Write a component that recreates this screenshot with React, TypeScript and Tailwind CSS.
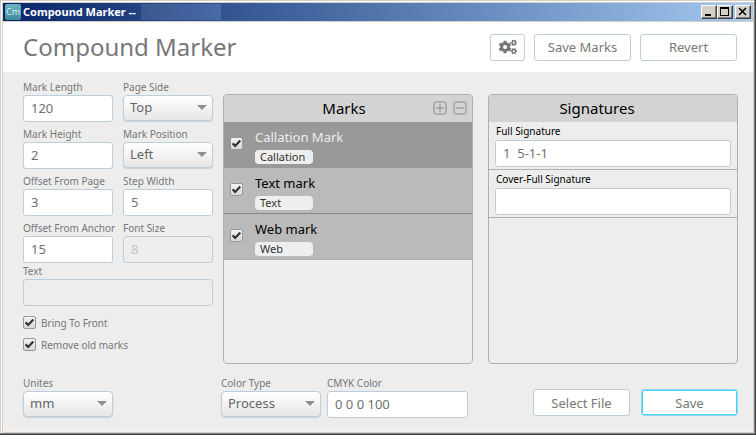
import { useState } from 'react'
import type { ReactNode } from 'react'
import { FaCogs } from 'react-icons/fa'

interface FieldProps {
  id: string
  label: string
  className?: string
  children: ReactNode
}

function Field({ id, label, className = '', children }: FieldProps) {
  return (
    <div className={`flex min-w-0 flex-col ${className}`}>
      <label htmlFor={id} className="h-[14px] text-[10px] leading-[13px] whitespace-nowrap text-[#777]">
        {label}
      </label>
      {children}
    </div>
  )
}

interface TextInputProps {
  id: string
  value?: string
  disabled?: boolean
}

function TextInput({ id, value = '', disabled = false }: TextInputProps) {
  return (
    <input
      id={id}
      type="text"
      defaultValue={value}
      disabled={disabled}
      className="h-[27px] w-full rounded-[3px] border border-[#bccddb] bg-white px-[7px] pb-[2px] text-[13px] whitespace-pre text-[#707070] outline-none disabled:bg-[#ededed] disabled:text-[#c4c4c4]"
    />
  )
}

function Select({ id, options }: { id: string; options: string[] }) {
  return (
    <div className="relative h-[27px]">
      <select
        id={id}
        className="block h-[26px] w-full appearance-none rounded-[4px] border border-[#bccddb] bg-linear-to-b from-white to-[#e6e6e6] px-[6px] text-[13px] text-[#666] shadow-[0_1px_1px_#c8cdd1] outline-none"
      >
        {options.map((o) => (
          <option key={o}>{o}</option>
        ))}
      </select>
      <svg viewBox="0 0 10 5" className="pointer-events-none absolute top-[10px] right-[6px] h-[5px] w-[10px] fill-[#8f8f8f]">
        <path d="M0 0h10L5 5z" />
      </svg>
    </div>
  )
}

function CheckBox({ id, label }: { id: string; label?: string }) {
  const [checked, setChecked] = useState(true)
  return (
    <span className="relative block size-[13px] shrink-0">
      <input
        id={id}
        type="checkbox"
        aria-label={label}
        checked={checked}
        onChange={(e) => setChecked(e.target.checked)}
        className="block size-[13px] appearance-none rounded-[2px] border border-[#989898] bg-linear-to-b from-[#f4f4f4] to-[#d8d8d8]"
      />
      {checked && (
        <svg viewBox="0 0 13 13" className="pointer-events-none absolute inset-0 size-[13px] fill-none stroke-[#353535]">
          <path d="M2.6 6.4 5.2 9 10.3 3.5" strokeWidth="2.2" />
        </svg>
      )}
    </span>
  )
}

function Button({ className = '', children }: { className?: string; children: ReactNode }) {
  return (
    <button
      type="button"
      className={`flex h-[27px] items-center justify-center rounded-[3px] border bg-white text-[13px] text-[#777] ${className}`}
    >
      {children}
    </button>
  )
}

function WindowButton({ label, children }: { label: string; children: ReactNode }) {
  return (
    <button
      type="button"
      aria-label={label}
      className="flex h-[14px] w-[16px] items-center justify-center border border-t-white border-r-[#404040] border-b-[#404040] border-l-white bg-[#d4d0c8] shadow-[inset_-1px_-1px_0_#808080]"
    >
      <svg viewBox="0 0 14 12" className="h-[12px] w-[14px] fill-none stroke-black" shapeRendering="crispEdges">
        {children}
      </svg>
    </button>
  )
}

const marks = [
  { name: 'Callation Mark', type: 'Callation' },
  { name: 'Text mark', type: 'Text' },
  { name: 'Web mark', type: 'Web' },
]

function MarksPanel() {
  const [selected, setSelected] = useState(0)
  return (
    <section className="flex flex-1 flex-col overflow-hidden rounded-[4px] border border-[#aeb0b0]">
      <header className="grid h-[27px] grid-cols-[1fr_auto_1fr] items-center bg-[#d3d3d3] px-[5px]">
        <h2 className="col-start-2 pr-2 text-[15px] text-black">Marks</h2>
        <div className="flex justify-end gap-[6px] pb-[2px]">
          <button type="button" aria-label="Add mark">
            <svg viewBox="0 0 14 14" className="block size-[14px] fill-none stroke-[#8c8c8c]">
              <rect x="1" y="1" width="12" height="12" rx="2" />
              <path d="M7 3v8M3 7h8" />
            </svg>
          </button>
          <button type="button" aria-label="Remove mark">
            <svg viewBox="0 0 14 14" className="block size-[14px] fill-none stroke-[#8c8c8c]">
              <rect x="1" y="1" width="12" height="12" rx="2" />
              <path d="M3 7h8" />
            </svg>
          </button>
        </div>
      </header>
      <ul>
        {marks.map((mark, i) => (
          <li
            key={mark.name}
            onClick={() => setSelected(i)}
            className={`flex h-[46px] items-center gap-[12px] border-b pb-[2px] pl-[6px] ${
              i === selected
                ? 'border-[#999] bg-[#999] text-[#eee]'
                : 'border-[#858585] bg-[#bababa] text-black last:border-[#aeb0b0]'
            }`}
          >
            <CheckBox id={`mark-${i}`} label={mark.name} />
            <div className="flex flex-col gap-[4px] pt-1">
              <span className="text-[13px] leading-[18px] whitespace-nowrap">{mark.name}</span>
              <span className="h-[14px] w-[58px] rounded-[4px] bg-[#eee] pl-[5px] text-[11px] leading-[14px] text-[#333]">
                {mark.type}
              </span>
            </div>
          </li>
        ))}
      </ul>
    </section>
  )
}

const signatures = [
  { id: 'full-signature', label: 'Full Signature', value: '1  5-1-1' },
  { id: 'cover-signature', label: 'Cover-Full Signature', value: '' },
]

function SignaturesPanel() {
  return (
    <section className="flex flex-1 flex-col overflow-hidden rounded-[4px] border border-[#aeb0b0]">
      <header className="flex h-[27px] items-center justify-center bg-[#d3d3d3] pr-8">
        <h2 className="text-[15px] text-black">Signatures</h2>
      </header>
      {signatures.map((s) => (
        <div key={s.id} className="flex h-[48px] flex-col justify-end border-b border-[#aeb0b0] px-[6px] pb-[2px]">
          <label htmlFor={s.id} className="h-[15px] pl-px text-[10px] leading-[13px] text-black">
            {s.label}
          </label>
          <TextInput id={s.id} value={s.value} />
        </div>
      ))}
    </section>
  )
}

export default function App() {
  return (
    <div className="flex min-h-screen flex-col border-r border-b border-[#404040] bg-[#d4d0c8] p-[3px] pr-[2px] pb-[2px] font-['Noto_Sans','Open_Sans',sans-serif] shadow-[inset_-1px_-1px_0_#808080,inset_1px_1px_0_#d4d0c8,inset_2px_2px_0_#fff]">
      <div className="flex h-[18px] items-center gap-[2px] bg-linear-to-r from-[#0a246a] to-[#a6caf0] px-[2px]">
        <span className="flex size-[16px] items-center justify-center rounded-[2px] bg-linear-to-b from-[#6fb4c4] to-[#3d8a9d] text-[9px] text-[#cfeef4]">
          Cm
        </span>
        <span className="min-w-[116px] text-[11px] font-bold whitespace-nowrap text-white">
          Compound Marker --
        </span>
        <span className="h-[16px] w-[80px] bg-linear-to-r from-[#3b5791] to-[#496aa5]" />
        <div className="ml-auto flex">
          <WindowButton label="Minimize">
            <path d="M3 9h6" strokeWidth="2" />
          </WindowButton>
          <WindowButton label="Maximize">
            <path d="M2 2h9" strokeWidth="2" />
            <path d="M2.5 2v7.5h8V2" />
          </WindowButton>
          <div className="ml-[2px] flex">
            <WindowButton label="Close">
              <path d="m3 2 7 7M10 2 3 9" strokeWidth="1.6" shapeRendering="auto" />
            </WindowButton>
          </div>
        </div>
      </div>

      <header className="mt-px flex h-[50px] items-center gap-[9px] bg-white pr-[16px] pl-[20px]">
        <h1 className="mr-auto text-[24px] whitespace-nowrap text-[#777]">Compound Marker</h1>
        <Button className="w-[35px] border-[#bccddb]">
          <FaCogs size={18} aria-label="Settings" />
        </Button>
        <Button className="w-[97px] border-[#bccddb] pt-[2px]">Save Marks</Button>
        <Button className="w-[97px] border-[#bccddb] pt-[2px]">Revert</Button>
      </header>

      <main className="flex grow flex-col border-b-[5px] border-[#f3efee] bg-[#ededed] pt-[9px] pr-[15px] pb-[9px] pl-[20px]">
        <div className="flex">
          <div className="grid w-[190px] shrink-0 grid-cols-2 content-start gap-x-[10px]">
            <Field id="length" label="Mark Length" className="mb-[6px]">
              <TextInput id="length" value="120" />
            </Field>
            <Field id="side" label="Page Side" className="mb-[6px]">
              <Select id="side" options={['Top', 'Bottom', 'Left', 'Right']} />
            </Field>
            <Field id="height" label="Mark Height" className="mb-[6px]">
              <TextInput id="height" value="2" />
            </Field>
            <Field id="position" label="Mark Position" className="mb-[6px]">
              <Select id="position" options={['Left', 'Center', 'Right']} />
            </Field>
            <Field id="offset-page" label="Offset From Page" className="mb-[6px]">
              <TextInput id="offset-page" value="3" />
            </Field>
            <Field id="step" label="Step Width" className="mb-[6px]">
              <TextInput id="step" value="5" />
            </Field>
            <Field id="offset-anchor" label="Offset From Anchor">
              <TextInput id="offset-anchor" value="15" />
            </Field>
            <Field id="font-size" label="Font Size">
              <TextInput id="font-size" value="8" disabled />
            </Field>
            <Field id="text" label="Text" className="col-span-2 mt-[2px]">
              <TextInput id="text" disabled />
            </Field>
            <div className="col-span-2 mt-[10px] flex flex-col gap-[8px] text-[10px] leading-[13px] text-[#777]">
              <div className="flex gap-[5px]">
                <CheckBox id="front" />
                <label htmlFor="front" className="pt-px">Bring To Front</label>
              </div>
              <div className="flex gap-[5px]">
                <CheckBox id="remove" />
                <label htmlFor="remove" className="pt-px">Remove old marks</label>
              </div>
            </div>
          </div>
          <div className="mt-[13px] ml-[10px] flex min-h-[270px] grow gap-[15px]">
            <MarksPanel />
            <SignaturesPanel />
          </div>
        </div>

        <div className="mt-[13px] flex items-end">
          <Field id="units" label="Unites" className="w-[90px]">
            <Select id="units" options={['mm', 'cm', 'inch']} />
          </Field>
          <Field id="color-type" label="Color Type" className="ml-[108px] w-[100px]">
            <Select id="color-type" options={['Process', 'Spot']} />
          </Field>
          <Field id="cmyk" label="CMYK Color" className="ml-[6px] w-[141px]">
            <TextInput id="cmyk" value="0 0 0 100" />
          </Field>
          <div className="mb-[2px] ml-auto flex gap-[11px]">
            <Button className="w-[97px] border-[#bccddb] pt-[2px]">Select File</Button>
            <Button className="w-[97px] border-[#8fd6ee] pt-[2px] shadow-[inset_0_0_0_1px_#45d3f8]">Save</Button>
          </div>
        </div>
      </main>
    </div>
  )
}
